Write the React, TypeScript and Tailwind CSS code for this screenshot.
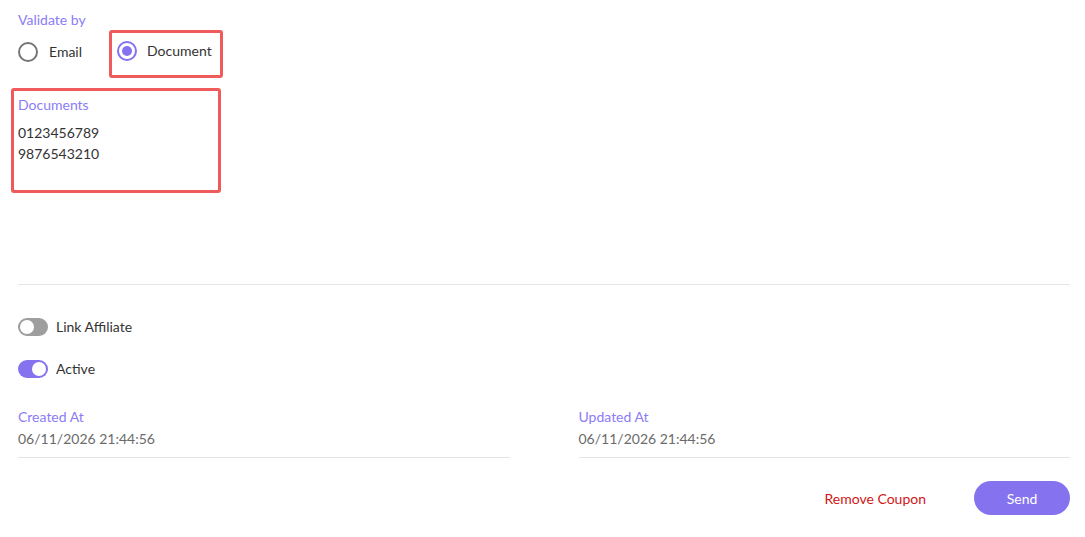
import React, { useState } from 'react';

const Toggle: React.FC<{ on: boolean; onChange: () => void; label: string }> = ({ on, onChange, label }) => (
  <button type="button" onClick={onChange} className="flex items-center gap-2 text-[14px] leading-[20px] text-[#333]">
    <span
      className={`flex h-[18px] w-[30px] items-center rounded-full px-[2px] ${on ? 'justify-end bg-[#8572ef]' : 'justify-start bg-[#9e9e9e]'}`}
    >
      <span className="h-[14px] w-[14px] rounded-full bg-white" />
    </span>
    <span>{label}</span>
  </button>
);

const Radio: React.FC<{ checked: boolean }> = ({ checked }) => (
  <span
    className={`flex h-[20px] w-[20px] shrink-0 items-center justify-center rounded-full border-2 ${checked ? 'border-[#8572ef]' : 'border-[#757575]'}`}
  >
    {checked && <span className="h-[10px] w-[10px] rounded-full bg-[#8572ef]" />}
  </span>
);

export default function App() {
  const [validateBy, setValidateBy] = useState<'email' | 'document'>('document');
  const [affiliate, setAffiliate] = useState(false);
  const [active, setActive] = useState(true);

  return (
    <div className="bg-white pb-[20px] pl-[18px] pr-[15px] pt-[10px] font-['Lato','Open_Sans',sans-serif] text-[14px] leading-[21px] text-[#333]">
      <div className="leading-[20px] text-[#8b7cf6]">Validate by</div>
      <div className="flex items-start">
        <button type="button" onClick={() => setValidateBy('email')} className="flex items-center gap-[11px] pr-[29px] pt-[11px]">
          <Radio checked={validateBy === 'email'} />
          <span>Email</span>
        </button>
        <button
          type="button"
          onClick={() => setValidateBy('document')}
          className="-ml-[2px] flex h-[48px] w-[114px] items-start gap-[10px] rounded-[3px] border-[3px] border-[#ef5b5b] pl-[5px] pt-[8px]"
        >
          <Radio checked={validateBy === 'document'} />
          <span className="leading-[20px]">Document</span>
        </button>
      </div>

      <div className="-ml-[7px] mt-[10px] h-[105px] w-[210px] rounded-[3px] border-[3px] border-[#ef5b5b] px-[4px] pt-[4px]">
        <div className="leading-[20px] text-[#8b7cf6]">Documents</div>
        <div className="mt-[7px]">
          <div>0123456789</div>
          <div>9876543210</div>
        </div>
      </div>

      <div className="mt-[91px] border-t border-[#e5e5e5]" />

      <div className="mt-[32px] flex flex-col items-start gap-[22px]">
        <Toggle on={affiliate} onChange={() => setAffiliate(!affiliate)} label="Link Affiliate" />
        <Toggle on={active} onChange={() => setActive(!active)} label="Active" />
      </div>

      <div className="mt-[27px] grid grid-cols-2 gap-[69px]">
        <div className="border-b border-[#e5e5e5] pb-[8px]">
          <div className="text-[#8b7cf6]">Created At</div>
          <div className="mt-[1px] text-[#6b6b6b]">06/11/2026 21:44:56</div>
        </div>
        <div className="border-b border-[#e5e5e5] pb-[8px]">
          <div className="text-[#8b7cf6]">Updated At</div>
          <div className="mt-[1px] text-[#6b6b6b]">06/11/2026 21:44:56</div>
        </div>
      </div>

      <div className="mt-[23px] flex items-center justify-end gap-[48px]">
        <button type="button" className="text-[#d01616]">Remove Coupon</button>
        <button type="button" className="h-[34px] w-[96px] rounded-full bg-[#8572ef] text-white">Send</button>
      </div>
    </div>
  );
}
